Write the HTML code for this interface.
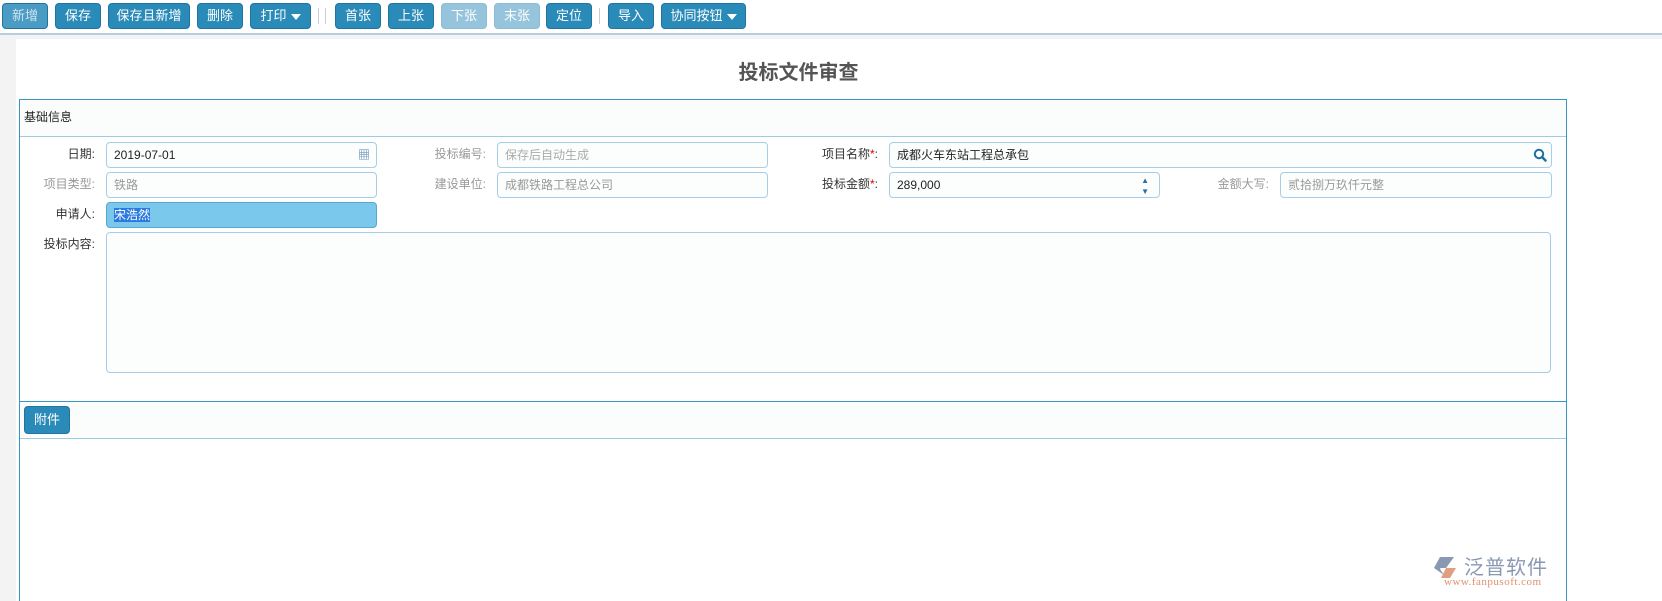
<!DOCTYPE html>
<html><head><meta charset="utf-8"><style>
*{margin:0;padding:0;box-sizing:border-box}
html,body{width:1662px;height:601px;overflow:hidden}
body{background:#fff;font-family:"Liberation Sans","Noto Sans CJK SC",sans-serif;font-size:12px;color:#333;position:relative}
.a{position:absolute}
.b{position:absolute;top:3px;height:26px;background:#2a8ab8;color:#fff;border:1px solid #1f74a0;border-radius:4px;font-size:13px;line-height:24px;text-align:center}
.b.d{background:#95c4dc;border-color:#8dbcd4}
.sep{position:absolute;top:8px;width:1px;height:16px;background:#ccc}
.l{position:absolute;text-align:right;width:90px;font-size:12px;line-height:25px}
.g{color:#999}
.i{position:absolute;height:26px;border:1px solid #a8cde6;border-radius:4px;background:#fcfdfd;padding-left:7px;line-height:24px;font-size:12px}
.tri{display:inline-block;width:0;height:0;border-left:5px solid transparent;border-right:5px solid transparent;border-top:6px solid #fff;vertical-align:middle;margin-left:4px}
</style></head><body>
<div class="b" style="left:2px;width:46px;background:#4a9cc5;color:#cfe3ee">新增</div>
<div class="b" style="left:55px;width:46px">保存</div>
<div class="b" style="left:108px;width:82px">保存且新增</div>
<div class="b" style="left:197px;width:46px">删除</div>
<div class="b" style="left:250px;width:61px">打印<span class="tri"></span></div>
<div class="sep" style="left:318px"></div><div class="sep" style="left:325px"></div>
<div class="b" style="left:335px;width:46px">首张</div>
<div class="b" style="left:388px;width:46px">上张</div>
<div class="b d" style="left:441px;width:46px">下张</div>
<div class="b d" style="left:494px;width:46px">末张</div>
<div class="b" style="left:546px;width:46px">定位</div>
<div class="sep" style="left:599px"></div>
<div class="b" style="left:608px;width:46px">导入</div>
<div class="b" style="left:661px;width:85px">协同按钮<span class="tri"></span></div>
<div class="a" style="left:0;top:33px;width:1662px;height:2px;background:#b6cfdd"></div>
<div class="a" style="left:0;top:35px;width:16px;height:566px;background:#f3f3f3"></div>
<div class="a" style="left:16px;top:35px;width:1646px;height:4px;background:#f3f3f3"></div>
<div class="a" style="left:0;top:56px;width:1597px;text-align:center;font-size:20px;font-weight:bold;color:#555">投标文件审查</div>
<div class="a" style="left:19px;top:99px;width:1548px;height:502px;border:1px solid #3a96c4;border-bottom:none;background:#fbfdfd"></div>
<div class="a" style="left:20px;top:136px;width:1546px;height:265px;border-top:1px solid #9ccbe5;background:#fff"></div>
<div class="a" style="left:24px;top:108px;font-size:12px;color:#222">基础信息</div>
<div class="l" style="left:5px;top:142px">日期:</div>
<div class="i" style="left:106px;top:142px;width:271px;color:#222">2019-07-01<span style="position:absolute;right:6px;top:0;color:#4a7fb0">▦</span></div>
<div class="l g" style="left:396px;top:142px">投标编号:</div>
<div class="i g" style="left:497px;top:142px;width:271px;color:#aaa">保存后自动生成</div>
<div class="l" style="left:788px;top:142px">项目名称<span style="color:#d00">*</span>:</div>
<div class="i" style="left:889px;top:142px;width:663px;color:#222">成都火车东站工程总承包<svg style="position:absolute;right:4px;top:5px" width="14" height="14" viewBox="0 0 14 14"><circle cx="6" cy="6" r="4.2" fill="none" stroke="#1a6fa0" stroke-width="2"/><path d="M9 9l3.5 3.5" stroke="#1a6fa0" stroke-width="2.4" stroke-linecap="round"/></svg></div>
<div class="l g" style="left:5px;top:172px">项目类型:</div>
<div class="i" style="left:106px;top:172px;width:271px;color:#999">铁路</div>
<div class="l g" style="left:396px;top:172px">建设单位:</div>
<div class="i" style="left:497px;top:172px;width:271px;color:#999">成都铁路工程总公司</div>
<div class="l" style="left:788px;top:172px">投标金额<span style="color:#d00">*</span>:</div>
<div class="i" style="left:889px;top:172px;width:271px;color:#222">289,000<span style="position:absolute;right:10px;top:0;color:#2a6fa0;font-size:8px;line-height:11px;padding-top:2px">▲<br>▼</span></div>
<div class="l g" style="left:1179px;top:172px">金额大写:</div>
<div class="i" style="left:1280px;top:172px;width:272px;color:#999">贰拾捌万玖仟元整</div>
<div class="l" style="left:5px;top:202px">申请人:</div>
<div class="i" style="left:106px;top:202px;width:271px;background:#7ac8ec;border-color:#5aa8cc"><span style="background:#2a7ae0;color:#fff">宋浩然</span></div>
<div class="l" style="left:5px;top:232px">投标内容:</div>
<div class="i" style="left:106px;top:232px;width:1445px;height:141px"></div>
<div class="a" style="left:20px;top:401px;width:1546px;height:1px;background:#3a96c4"></div>
<div class="b" style="left:24px;top:406px;width:46px;height:28px;line-height:26px">附件</div>
<div class="a" style="left:20px;top:438px;width:1546px;height:163px;border-top:1px solid #9ccbe5;background:#fff"></div>
<svg class="a" style="left:1432px;top:556px" width="30" height="24" viewBox="0 0 30 24"><path d="M8 1h14l-8 11H6z" fill="#8a98b4"/><path d="M2 12l6-11 4 6-4 6 4 6z" fill="#8a98b4"/><path d="M14 12h10l-6 10H9z" fill="#e0a080"/></svg>
<div class="a" style="left:1464px;top:551px;font-size:20px;color:#8a98b4;letter-spacing:1px">泛普软件</div>
<div class="a" style="left:1444px;top:576px;font-family:'Liberation Serif',serif;font-size:11px;color:#e09070;letter-spacing:0.5px">www.fanpusoft.com</div>
</body></html>
